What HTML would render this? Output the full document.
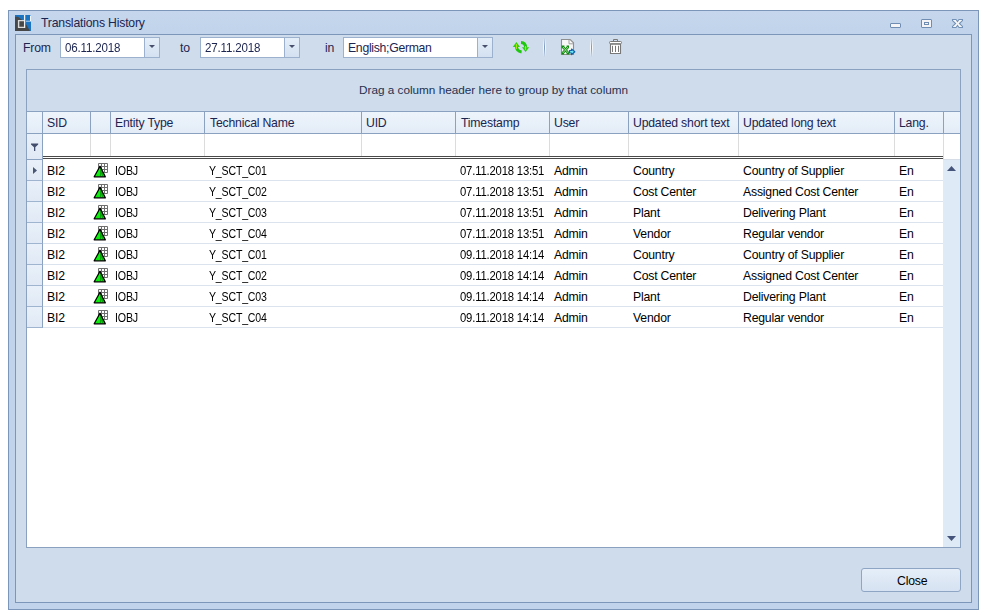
<!DOCTYPE html>
<html><head><meta charset="utf-8">
<style>
*{box-sizing:border-box;margin:0;padding:0}
html,body{width:988px;height:616px;background:#fff;overflow:hidden}
body{position:relative;font-family:"Liberation Sans",sans-serif;font-size:11.75px;color:#1e2340}
.a{position:absolute}
.t{position:absolute;white-space:pre;line-height:14px;font-size:12.25px;letter-spacing:-0.2px}
.k{position:absolute;white-space:pre;line-height:14px;color:#000;font-size:12.25px;letter-spacing:-0.2px}
.h{position:absolute;white-space:pre;line-height:14px;color:#1c2550;font-size:12.25px;letter-spacing:-0.2px}
.box{position:absolute;background:#fff;border:1px solid #9bb1cd}
.btn{position:absolute;background:linear-gradient(#e4eef9,#d4e1f1);border-left:1px solid #9bb1cd}
.arr{position:absolute;width:0;height:0;border-left:3px solid transparent;border-right:3px solid transparent;border-top:3px solid #474f6c}
.sep{position:absolute;top:38px;width:3px;height:19px;background:linear-gradient(90deg,rgba(255,255,255,.8) 33.3%,#7f9bc1 33.3%,#7f9bc1 66.6%,rgba(255,255,255,.8) 66.6%);-webkit-mask-image:linear-gradient(transparent,#000 45%,#000 55%,transparent)}
</style></head><body>
<div class="a" style="left:8px;top:10px;width:971px;height:600px;background:linear-gradient(#c6d7ed,#c0d3ea 25px,#c0d3ea);border:1px solid #7b96b9"></div>
<svg class="a" style="left:15px;top:15px" width="16" height="16" viewBox="0 0 16 16"><rect width="16" height="16" fill="#1b74c1"/><polygon points="0,1.8 3,1.8 9.6,6.8 11.2,9.6 15,16 0,16" fill="#474747"/><path d="M9.2 5.6H3.6V12.4H9.2" fill="none" stroke="#dadada" stroke-width="1.4"/><path d="M9.6 0V13" stroke="#f2f2f2" stroke-width="1.3"/><path d="M11 6.2H15" stroke="#b8d2ec" stroke-width="1"/><path d="M15.5 0.5V6.5" stroke="#f4f8fc" stroke-width="1"/></svg>
<div class="h" style="left:41px;top:16px;font-size:12.25px">Translations History</div>
<div class="a" style="left:890px;top:23px;width:11px;height:5px;background:#f4f4f6;border:1px solid #6f8db3;border-radius:1px"></div>
<div class="a" style="left:921px;top:19px;width:11px;height:9px;background:#f4f4f6;border:1px solid #6f8db3;border-radius:1px"></div>
<div class="a" style="left:924px;top:22px;width:5px;height:3px;background:#6f8db3;border:1px solid #6f8db3"></div>
<div class="a" style="left:925px;top:23px;width:3px;height:1px;background:#f4f4f6"></div>
<svg class="a" style="left:951px;top:18px" width="13" height="11" viewBox="0 0 13 11"><polygon points="1.5,1.5 5,1.5 6.5,3.6 8,1.5 11.5,1.5 11.5,2.6 8.4,5.5 11.5,8.4 11.5,9.5 8,9.5 6.5,7.4 5,9.5 1.5,9.5 1.5,8.4 4.6,5.5 1.5,2.6" fill="#f7f8fa" stroke="#7391b6" stroke-width="1.1" stroke-linejoin="miter"/></svg>
<div class="a" style="left:15px;top:34px;width:957px;height:569px;background:#cfdcec;border:1px solid #7b96b9"></div>
<div class="h" style="left:23px;top:41px;">From</div>
<div class="box" style="left:60px;top:37px;width:100px;height:21px"></div>
<div class="btn" style="left:144px;top:38px;width:15px;height:19px"></div>
<div class="arr" style="left:149px;top:45px"></div>
<div class="h" style="left:65px;top:41px;transform-origin:0 0;transform:scaleX(.944)">06.11.2018</div>
<div class="h" style="left:180px;top:41px;">to</div>
<div class="box" style="left:200px;top:37px;width:100px;height:21px"></div>
<div class="btn" style="left:284px;top:38px;width:15px;height:19px"></div>
<div class="arr" style="left:289px;top:45px"></div>
<div class="h" style="left:205px;top:41px;transform-origin:0 0;transform:scaleX(.944)">27.11.2018</div>
<div class="h" style="left:325px;top:41px;">in</div>
<div class="box" style="left:343px;top:37px;width:150px;height:21px"></div>
<div class="btn" style="left:477px;top:38px;width:15px;height:19px"></div>
<div class="arr" style="left:482px;top:45px"></div>
<div class="h" style="left:348px;top:41px;letter-spacing:-0.3px">English;German</div>
<svg class="a" style="left:510px;top:38px" width="22" height="18" viewBox="0 0 22 18"><path d="M6.4 8C6.4 11.5 8.3 13.4 11.6 13.9" fill="none" stroke="#1fc80f" stroke-width="3"/><polygon points="2.8,9 6.4,3.9 10,9" fill="#2cd010"/><path d="M6.4 6V11" stroke="#b4ec00" stroke-width="1"/><path d="M11 4.4C14 4.5 15.6 6.6 15.6 9.5" fill="none" stroke="#1fc80f" stroke-width="3"/><polygon points="12,9.2 19.2,9.2 15.6,13.9" fill="#2cd010"/><path d="M15.6 8V12" stroke="#b4ec00" stroke-width="1"/></svg>
<div class="sep" style="left:543px"></div>
<svg class="a" style="left:558px;top:36px" width="22" height="22" viewBox="0 0 22 22"><path d="M3.5 3.5H12.2L15.5 6.8V18.5H3.5Z" fill="#f7f7f7" stroke="#8e8e8e" stroke-width="1.1"/><path d="M11 3.8V7.8H15.3" fill="none" stroke="#a0a0a0" stroke-width="1"/><path d="M5 11L10.2 17M10 11L4.8 17M3.6 10.9H6.4M8.6 10.9H11M3.6 17.2H6.2M8.6 17.2H11.2" stroke="#0c8a0c" stroke-width="2.6"/><path d="M5 11L10.2 17M10 11L4.8 17" stroke="#a6e39a" stroke-width="0.9"/><path d="M11.5 14.5H13.5V13L16.8 15.8L13.5 18.6V17H11.5Z" fill="#6ee6f6" stroke="#0f62a6" stroke-width="1.2" stroke-linejoin="round"/></svg>
<div class="sep" style="left:590px"></div>
<svg class="a" style="left:608px;top:38px" width="16" height="18" viewBox="0 0 16 18"><path d="M5.5 3.5V1.5H9.5V3.5" fill="none" stroke="#787878" stroke-width="1"/><rect x="1.5" y="3.5" width="12" height="2.2" rx="1" fill="#fff" stroke="#787878" stroke-width="1"/><path d="M2.5 6.2H12.5V15.5H2.5Z" fill="#fff" stroke="#787878" stroke-width="1.1"/><path d="M4.5 7.8V14M7.5 7.8V14M10.5 7.8V14" stroke="#787878" stroke-width="1"/></svg>
<div class="a" style="left:26px;top:69px;width:935px;height:479px;background:#fff;border:1px solid #8aa2c0"></div>
<div class="a" style="left:27px;top:70px;width:933px;height:41px;background:#cfdcec"></div>
<div class="h" style="left:359px;top:83px;color:#25304f;font-size:11.75px;letter-spacing:0">Drag a column header here to group by that column</div>
<div class="a" style="left:27px;top:111px;width:933px;height:23px;background:linear-gradient(#eef4fb,#e3ecf7);border-top:1px solid #8aa2c0;border-bottom:1px solid #8aa2c0"></div>
<div class="a" style="left:42px;top:112px;width:1px;height:21px;background:#8aa2c0"></div>
<div class="a" style="left:90px;top:112px;width:1px;height:21px;background:#8aa2c0"></div>
<div class="a" style="left:110px;top:112px;width:1px;height:21px;background:#8aa2c0"></div>
<div class="a" style="left:204px;top:112px;width:1px;height:21px;background:#8aa2c0"></div>
<div class="a" style="left:361px;top:112px;width:1px;height:21px;background:#8aa2c0"></div>
<div class="a" style="left:455px;top:112px;width:1px;height:21px;background:#8aa2c0"></div>
<div class="a" style="left:549px;top:112px;width:1px;height:21px;background:#8aa2c0"></div>
<div class="a" style="left:628px;top:112px;width:1px;height:21px;background:#8aa2c0"></div>
<div class="a" style="left:738px;top:112px;width:1px;height:21px;background:#8aa2c0"></div>
<div class="a" style="left:894px;top:112px;width:1px;height:21px;background:#8aa2c0"></div>
<div class="a" style="left:943px;top:112px;width:1px;height:21px;background:#8aa2c0"></div>
<div class="h" style="left:47px;top:116px;">SID</div>
<div class="h" style="left:115px;top:116px;">Entity Type</div>
<div class="h" style="left:210px;top:116px;">Technical Name</div>
<div class="h" style="left:366px;top:116px;">UID</div>
<div class="h" style="left:461px;top:116px;">Timestamp</div>
<div class="h" style="left:554px;top:116px;">User</div>
<div class="h" style="left:633px;top:116px;">Updated short text</div>
<div class="h" style="left:743px;top:116px;">Updated long text</div>
<div class="h" style="left:899px;top:116px;">Lang.</div>
<div class="a" style="left:27px;top:134px;width:16px;height:26px;background:linear-gradient(#e9f0f9,#e0e9f5);border-right:1px solid #8aa2c0;border-bottom:1px solid #8aa2c0"></div>
<div class="a" style="left:90px;top:134px;width:1px;height:22px;background:#dcdcdc"></div>
<div class="a" style="left:110px;top:134px;width:1px;height:22px;background:#dcdcdc"></div>
<div class="a" style="left:204px;top:134px;width:1px;height:22px;background:#dcdcdc"></div>
<div class="a" style="left:361px;top:134px;width:1px;height:22px;background:#dcdcdc"></div>
<div class="a" style="left:455px;top:134px;width:1px;height:22px;background:#dcdcdc"></div>
<div class="a" style="left:549px;top:134px;width:1px;height:22px;background:#dcdcdc"></div>
<div class="a" style="left:628px;top:134px;width:1px;height:22px;background:#dcdcdc"></div>
<div class="a" style="left:738px;top:134px;width:1px;height:22px;background:#dcdcdc"></div>
<div class="a" style="left:894px;top:134px;width:1px;height:22px;background:#dcdcdc"></div>
<div class="a" style="left:943px;top:134px;width:1px;height:22px;background:#dcdcdc"></div>
<div class="a" style="left:943px;top:134px;width:1px;height:25px;background:#dcdcdc"></div>
<div class="a" style="left:943px;top:159px;width:17px;height:1px;background:#d6dde6"></div>
<div class="a" style="left:43px;top:156px;width:900px;height:3px;border-top:1px solid #4a4a4a;border-bottom:1px solid #4a4a4a"></div>
<svg class="a" style="left:31px;top:143px" width="8" height="9" viewBox="0 0 8 9"><path d="M0 0.6H7.2V1.6L4.3 4.2V8H3V4.2L0 1.6Z" fill="#434e6c"/></svg>
<div class="a" style="left:27px;top:160px;width:15px;height:0px;background:#fff;border-right:0"></div>
<div class="a" style="left:943px;top:160px;width:17px;height:387px;background:#dfeaf7"></div>
<svg class="a" style="left:946px;top:165px" width="11" height="7"><polygon points="1,6 5.5,1 10,6" fill="#45547a"/></svg>
<svg class="a" style="left:946px;top:535px" width="11" height="7"><polygon points="1,1 5.5,6 10,1" fill="#45547a"/></svg>
<div class="a" style="left:27px;top:160px;width:16px;height:21px;background:linear-gradient(#e9f0f9,#e0e9f5);border-bottom:1px solid #9fb4cf;border-right:1px solid #8aa2c0"></div>
<div class="a" style="left:43px;top:180px;width:900px;height:1px;background:#dbe3ee"></div>
<div class="k" style="left:47px;top:164px;">BI2</div>
<div class="k" style="left:115px;top:164px;transform-origin:0 0;transform:scaleX(.87)">IOBJ</div>
<div class="k" style="left:209px;top:164px;transform-origin:0 0;transform:scaleX(.862)">Y_SCT_C01</div>
<div class="k" style="left:460px;top:164px;transform-origin:0 0;transform:scaleX(.922)">07.11.2018 13:51</div>
<div class="k" style="left:554px;top:164px;">Admin</div>
<div class="k" style="left:633px;top:164px;">Country</div>
<div class="k" style="left:743px;top:164px;">Country of Supplier</div>
<div class="k" style="left:899px;top:164px;">En</div>
<svg class="a" style="left:93px;top:163px" width="16" height="15" viewBox="0 0 16 15"><path d="M5.5 0.5H14.5V9.5H5.5ZM5.5 3.5H14.5M5.5 6.5H14.5M8.5 0.5V9.5M11.5 0.5V9.5" fill="#fff" stroke="#6e6e6e" stroke-width="1"/><defs><linearGradient id="g0" x1="0" x2="1" y1="0" y2="0"><stop offset="0.5" stop-color="#10f010"/><stop offset="0.5" stop-color="#0aa80a"/></linearGradient></defs><polygon points="7,3.2 12.3,13.8 1.2,13.8" fill="url(#g0)" stroke="#000" stroke-width="1.3" stroke-linejoin="round"/><path d="M4 12.3H10.5" stroke="#6a9a8a" stroke-width="1.6" stroke-dasharray="1 1"/></svg>
<div class="a" style="left:27px;top:181px;width:16px;height:21px;background:linear-gradient(#e9f0f9,#e0e9f5);border-bottom:1px solid #9fb4cf;border-right:1px solid #8aa2c0"></div>
<div class="a" style="left:43px;top:201px;width:900px;height:1px;background:#dbe3ee"></div>
<div class="k" style="left:47px;top:185px;">BI2</div>
<div class="k" style="left:115px;top:185px;transform-origin:0 0;transform:scaleX(.87)">IOBJ</div>
<div class="k" style="left:209px;top:185px;transform-origin:0 0;transform:scaleX(.862)">Y_SCT_C02</div>
<div class="k" style="left:460px;top:185px;transform-origin:0 0;transform:scaleX(.922)">07.11.2018 13:51</div>
<div class="k" style="left:554px;top:185px;">Admin</div>
<div class="k" style="left:633px;top:185px;">Cost Center</div>
<div class="k" style="left:743px;top:185px;">Assigned Cost Center</div>
<div class="k" style="left:899px;top:185px;">En</div>
<svg class="a" style="left:93px;top:184px" width="16" height="15" viewBox="0 0 16 15"><path d="M5.5 0.5H14.5V9.5H5.5ZM5.5 3.5H14.5M5.5 6.5H14.5M8.5 0.5V9.5M11.5 0.5V9.5" fill="#fff" stroke="#6e6e6e" stroke-width="1"/><defs><linearGradient id="g1" x1="0" x2="1" y1="0" y2="0"><stop offset="0.5" stop-color="#10f010"/><stop offset="0.5" stop-color="#0aa80a"/></linearGradient></defs><polygon points="7,3.2 12.3,13.8 1.2,13.8" fill="url(#g1)" stroke="#000" stroke-width="1.3" stroke-linejoin="round"/><path d="M4 12.3H10.5" stroke="#6a9a8a" stroke-width="1.6" stroke-dasharray="1 1"/></svg>
<div class="a" style="left:27px;top:202px;width:16px;height:21px;background:linear-gradient(#e9f0f9,#e0e9f5);border-bottom:1px solid #9fb4cf;border-right:1px solid #8aa2c0"></div>
<div class="a" style="left:43px;top:222px;width:900px;height:1px;background:#dbe3ee"></div>
<div class="k" style="left:47px;top:206px;">BI2</div>
<div class="k" style="left:115px;top:206px;transform-origin:0 0;transform:scaleX(.87)">IOBJ</div>
<div class="k" style="left:209px;top:206px;transform-origin:0 0;transform:scaleX(.862)">Y_SCT_C03</div>
<div class="k" style="left:460px;top:206px;transform-origin:0 0;transform:scaleX(.922)">07.11.2018 13:51</div>
<div class="k" style="left:554px;top:206px;">Admin</div>
<div class="k" style="left:633px;top:206px;">Plant</div>
<div class="k" style="left:743px;top:206px;">Delivering Plant</div>
<div class="k" style="left:899px;top:206px;">En</div>
<svg class="a" style="left:93px;top:205px" width="16" height="15" viewBox="0 0 16 15"><path d="M5.5 0.5H14.5V9.5H5.5ZM5.5 3.5H14.5M5.5 6.5H14.5M8.5 0.5V9.5M11.5 0.5V9.5" fill="#fff" stroke="#6e6e6e" stroke-width="1"/><defs><linearGradient id="g2" x1="0" x2="1" y1="0" y2="0"><stop offset="0.5" stop-color="#10f010"/><stop offset="0.5" stop-color="#0aa80a"/></linearGradient></defs><polygon points="7,3.2 12.3,13.8 1.2,13.8" fill="url(#g2)" stroke="#000" stroke-width="1.3" stroke-linejoin="round"/><path d="M4 12.3H10.5" stroke="#6a9a8a" stroke-width="1.6" stroke-dasharray="1 1"/></svg>
<div class="a" style="left:27px;top:223px;width:16px;height:21px;background:linear-gradient(#e9f0f9,#e0e9f5);border-bottom:1px solid #9fb4cf;border-right:1px solid #8aa2c0"></div>
<div class="a" style="left:43px;top:243px;width:900px;height:1px;background:#dbe3ee"></div>
<div class="k" style="left:47px;top:227px;">BI2</div>
<div class="k" style="left:115px;top:227px;transform-origin:0 0;transform:scaleX(.87)">IOBJ</div>
<div class="k" style="left:209px;top:227px;transform-origin:0 0;transform:scaleX(.862)">Y_SCT_C04</div>
<div class="k" style="left:460px;top:227px;transform-origin:0 0;transform:scaleX(.922)">07.11.2018 13:51</div>
<div class="k" style="left:554px;top:227px;">Admin</div>
<div class="k" style="left:633px;top:227px;">Vendor</div>
<div class="k" style="left:743px;top:227px;">Regular vendor</div>
<div class="k" style="left:899px;top:227px;">En</div>
<svg class="a" style="left:93px;top:226px" width="16" height="15" viewBox="0 0 16 15"><path d="M5.5 0.5H14.5V9.5H5.5ZM5.5 3.5H14.5M5.5 6.5H14.5M8.5 0.5V9.5M11.5 0.5V9.5" fill="#fff" stroke="#6e6e6e" stroke-width="1"/><defs><linearGradient id="g3" x1="0" x2="1" y1="0" y2="0"><stop offset="0.5" stop-color="#10f010"/><stop offset="0.5" stop-color="#0aa80a"/></linearGradient></defs><polygon points="7,3.2 12.3,13.8 1.2,13.8" fill="url(#g3)" stroke="#000" stroke-width="1.3" stroke-linejoin="round"/><path d="M4 12.3H10.5" stroke="#6a9a8a" stroke-width="1.6" stroke-dasharray="1 1"/></svg>
<div class="a" style="left:27px;top:244px;width:16px;height:21px;background:linear-gradient(#e9f0f9,#e0e9f5);border-bottom:1px solid #9fb4cf;border-right:1px solid #8aa2c0"></div>
<div class="a" style="left:43px;top:264px;width:900px;height:1px;background:#dbe3ee"></div>
<div class="k" style="left:47px;top:248px;">BI2</div>
<div class="k" style="left:115px;top:248px;transform-origin:0 0;transform:scaleX(.87)">IOBJ</div>
<div class="k" style="left:209px;top:248px;transform-origin:0 0;transform:scaleX(.862)">Y_SCT_C01</div>
<div class="k" style="left:460px;top:248px;transform-origin:0 0;transform:scaleX(.922)">09.11.2018 14:14</div>
<div class="k" style="left:554px;top:248px;">Admin</div>
<div class="k" style="left:633px;top:248px;">Country</div>
<div class="k" style="left:743px;top:248px;">Country of Supplier</div>
<div class="k" style="left:899px;top:248px;">En</div>
<svg class="a" style="left:93px;top:247px" width="16" height="15" viewBox="0 0 16 15"><path d="M5.5 0.5H14.5V9.5H5.5ZM5.5 3.5H14.5M5.5 6.5H14.5M8.5 0.5V9.5M11.5 0.5V9.5" fill="#fff" stroke="#6e6e6e" stroke-width="1"/><defs><linearGradient id="g4" x1="0" x2="1" y1="0" y2="0"><stop offset="0.5" stop-color="#10f010"/><stop offset="0.5" stop-color="#0aa80a"/></linearGradient></defs><polygon points="7,3.2 12.3,13.8 1.2,13.8" fill="url(#g4)" stroke="#000" stroke-width="1.3" stroke-linejoin="round"/><path d="M4 12.3H10.5" stroke="#6a9a8a" stroke-width="1.6" stroke-dasharray="1 1"/></svg>
<div class="a" style="left:27px;top:265px;width:16px;height:21px;background:linear-gradient(#e9f0f9,#e0e9f5);border-bottom:1px solid #9fb4cf;border-right:1px solid #8aa2c0"></div>
<div class="a" style="left:43px;top:285px;width:900px;height:1px;background:#dbe3ee"></div>
<div class="k" style="left:47px;top:269px;">BI2</div>
<div class="k" style="left:115px;top:269px;transform-origin:0 0;transform:scaleX(.87)">IOBJ</div>
<div class="k" style="left:209px;top:269px;transform-origin:0 0;transform:scaleX(.862)">Y_SCT_C02</div>
<div class="k" style="left:460px;top:269px;transform-origin:0 0;transform:scaleX(.922)">09.11.2018 14:14</div>
<div class="k" style="left:554px;top:269px;">Admin</div>
<div class="k" style="left:633px;top:269px;">Cost Center</div>
<div class="k" style="left:743px;top:269px;">Assigned Cost Center</div>
<div class="k" style="left:899px;top:269px;">En</div>
<svg class="a" style="left:93px;top:268px" width="16" height="15" viewBox="0 0 16 15"><path d="M5.5 0.5H14.5V9.5H5.5ZM5.5 3.5H14.5M5.5 6.5H14.5M8.5 0.5V9.5M11.5 0.5V9.5" fill="#fff" stroke="#6e6e6e" stroke-width="1"/><defs><linearGradient id="g5" x1="0" x2="1" y1="0" y2="0"><stop offset="0.5" stop-color="#10f010"/><stop offset="0.5" stop-color="#0aa80a"/></linearGradient></defs><polygon points="7,3.2 12.3,13.8 1.2,13.8" fill="url(#g5)" stroke="#000" stroke-width="1.3" stroke-linejoin="round"/><path d="M4 12.3H10.5" stroke="#6a9a8a" stroke-width="1.6" stroke-dasharray="1 1"/></svg>
<div class="a" style="left:27px;top:286px;width:16px;height:21px;background:linear-gradient(#e9f0f9,#e0e9f5);border-bottom:1px solid #9fb4cf;border-right:1px solid #8aa2c0"></div>
<div class="a" style="left:43px;top:306px;width:900px;height:1px;background:#dbe3ee"></div>
<div class="k" style="left:47px;top:290px;">BI2</div>
<div class="k" style="left:115px;top:290px;transform-origin:0 0;transform:scaleX(.87)">IOBJ</div>
<div class="k" style="left:209px;top:290px;transform-origin:0 0;transform:scaleX(.862)">Y_SCT_C03</div>
<div class="k" style="left:460px;top:290px;transform-origin:0 0;transform:scaleX(.922)">09.11.2018 14:14</div>
<div class="k" style="left:554px;top:290px;">Admin</div>
<div class="k" style="left:633px;top:290px;">Plant</div>
<div class="k" style="left:743px;top:290px;">Delivering Plant</div>
<div class="k" style="left:899px;top:290px;">En</div>
<svg class="a" style="left:93px;top:289px" width="16" height="15" viewBox="0 0 16 15"><path d="M5.5 0.5H14.5V9.5H5.5ZM5.5 3.5H14.5M5.5 6.5H14.5M8.5 0.5V9.5M11.5 0.5V9.5" fill="#fff" stroke="#6e6e6e" stroke-width="1"/><defs><linearGradient id="g6" x1="0" x2="1" y1="0" y2="0"><stop offset="0.5" stop-color="#10f010"/><stop offset="0.5" stop-color="#0aa80a"/></linearGradient></defs><polygon points="7,3.2 12.3,13.8 1.2,13.8" fill="url(#g6)" stroke="#000" stroke-width="1.3" stroke-linejoin="round"/><path d="M4 12.3H10.5" stroke="#6a9a8a" stroke-width="1.6" stroke-dasharray="1 1"/></svg>
<div class="a" style="left:27px;top:307px;width:16px;height:21px;background:linear-gradient(#e9f0f9,#e0e9f5);border-bottom:1px solid #9fb4cf;border-right:1px solid #8aa2c0"></div>
<div class="a" style="left:43px;top:327px;width:900px;height:1px;background:#dbe3ee"></div>
<div class="k" style="left:47px;top:311px;">BI2</div>
<div class="k" style="left:115px;top:311px;transform-origin:0 0;transform:scaleX(.87)">IOBJ</div>
<div class="k" style="left:209px;top:311px;transform-origin:0 0;transform:scaleX(.862)">Y_SCT_C04</div>
<div class="k" style="left:460px;top:311px;transform-origin:0 0;transform:scaleX(.922)">09.11.2018 14:14</div>
<div class="k" style="left:554px;top:311px;">Admin</div>
<div class="k" style="left:633px;top:311px;">Vendor</div>
<div class="k" style="left:743px;top:311px;">Regular vendor</div>
<div class="k" style="left:899px;top:311px;">En</div>
<svg class="a" style="left:93px;top:310px" width="16" height="15" viewBox="0 0 16 15"><path d="M5.5 0.5H14.5V9.5H5.5ZM5.5 3.5H14.5M5.5 6.5H14.5M8.5 0.5V9.5M11.5 0.5V9.5" fill="#fff" stroke="#6e6e6e" stroke-width="1"/><defs><linearGradient id="g7" x1="0" x2="1" y1="0" y2="0"><stop offset="0.5" stop-color="#10f010"/><stop offset="0.5" stop-color="#0aa80a"/></linearGradient></defs><polygon points="7,3.2 12.3,13.8 1.2,13.8" fill="url(#g7)" stroke="#000" stroke-width="1.3" stroke-linejoin="round"/><path d="M4 12.3H10.5" stroke="#6a9a8a" stroke-width="1.6" stroke-dasharray="1 1"/></svg>
<svg class="a" style="left:32px;top:166px" width="6" height="9"><polygon points="1,1 5,4.5 1,8" fill="#4a5774"/></svg>
<div class="a" style="left:861px;top:568px;width:100px;height:24px;border:1px solid #8ea5c3;border-radius:3px;background:linear-gradient(#e5eef9,#d6e2f1)"></div>
<div class="k" style="left:897px;top:574px;">Close</div>
</body></html>
